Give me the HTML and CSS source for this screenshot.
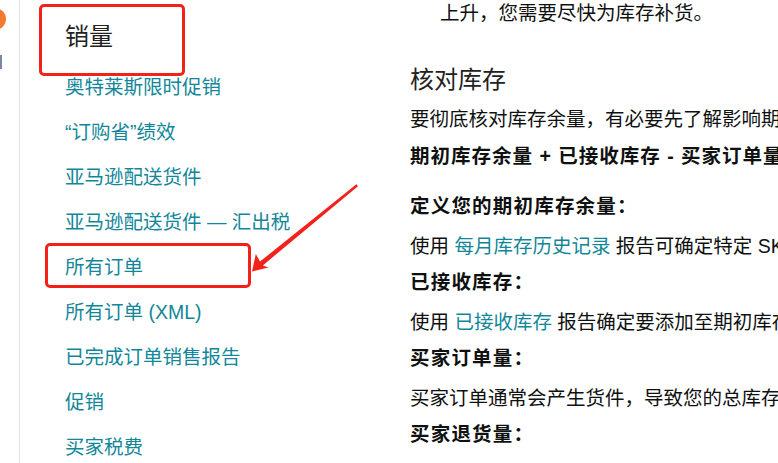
FILE: index.html
```html
<!DOCTYPE html>
<html>
   <head>
      <meta charset="UTF-8">
      <meta name="viewport" content="width=device-width, initial-scale=1.0">
      <title>库存核对</title>
      <link rel="stylesheet" href="styles.css">
   </head>
   <body>
      <div class="page">
         <!-- left rail, mostly cut off -->
         <div class="rail">
            <div class="rail-dot"></div>
            <div class="rail-mark"></div>
         </div>

         <div class="sidebar">
            <h2 class="side-title">销量</h2>
            <ul class="side-links">
               <li><a href="#">奥特莱斯限时促销</a></li>
               <li><a href="#">“订购省”绩效</a></li>
               <li><a href="#">亚马逊配送货件</a></li>
               <li><a href="#">亚马逊配送货件 — 汇出税</a></li>
               <li><a href="#">所有订单</a></li>
               <li><a href="#">所有订单 (XML)</a></li>
               <li><a href="#">已完成订单销售报告</a></li>
               <li><a href="#">促销</a></li>
               <li><a href="#">买家税费</a></li>
            </ul>
         </div>

         <div class="main">
            <p class="cont">上升，您需要尽快为库存补货。</p>
            <h2 class="main-title">核对库存</h2>
            <p class="intro">要彻底核对库存余量，有必要先了解影响期初库存余量的因素。</p>
            <p class="formula">期初库存余量 + 已接收库存 - 买家订单量 + 买家退货量 = 期末库存余量</p>

            <h3 class="label first">定义您的期初库存余量：</h3>
            <p class="text">使用 <a href="#">每月库存历史记录</a> 报告可确定特定 SKU 的期初库存余量。</p>
            <h3 class="label">已接收库存：</h3>
            <p class="text">使用 <a href="#">已接收库存</a> 报告确定要添加至期初库存余量的商品数量。</p>
            <h3 class="label">买家订单量：</h3>
            <p class="text">买家订单通常会产生货件，导致您的总库存减少。</p>
            <h3 class="label">买家退货量：</h3>
         </div>
      </div>

      <!-- annotations drawn over the page -->
      <div class="mark mark-title"></div>
      <div class="mark mark-orders"></div>
      <svg class="arrow" width="778" height="463" viewBox="0 0 778 463">
         <path d="M356.4,184.2 L358,186.2 L262.8,265.4 L268.5,267.5 L252,271.5 L255.8,254 L260,261.6 Z" fill="#f2221b"/>
      </svg>
   </body>
</html>
```

FILE: styles.css
```css
html, body
{
   margin: 0;
   padding: 0;
   overflow: hidden;
   background: #fff;
}
body
{
   position: relative;
   width: 778px;
   height: 463px;
   font-family: "Liberation Sans", "Noto Sans CJK SC", sans-serif;
   color: #0f1111;
}
a
{
   color: #12879a;
   text-decoration: none;
}
h2, h3, p, ul
{
   margin: 0;
   padding: 0;
   font-weight: normal;
}

.page
{
   display: flex;
   height: 463px;
}

/* rail */
.rail
{
   width: 19px;
   flex: none;
   border-right: 1px solid #e4e4e4;
   overflow: hidden;
}
.rail-dot
{
   width: 22px; height: 22px;
   margin: 8px 0 0 -16px;
   border-radius: 50%;
   background: #f57a2e;
}
.rail-mark
{
   width: 2px; height: 14px;
   margin-top: 25px;
   background: #7a88a6;
}

/* sidebar */
.sidebar
{
   width: 345px;
   flex: none;
   padding-left: 45px;
}
.side-title
{
   font-size: 24px;
   line-height: 34px;
   margin-top: 20px;
   margin-bottom: 11px;
   color: #222;
}
.side-links
{
   list-style: none;
}
.side-links li
{
   font-size: 19.5px;
   line-height: 45px;
   white-space: nowrap;
}

/* main text */
.main
{
   flex: 1;
   min-width: 0;
   overflow: hidden;
   font-size: 19.5px;
   line-height: 28px;
   white-space: nowrap;
}
.cont
{
   margin-top: -1px;
   padding-left: 30px;
}
.main-title
{
   font-size: 24px;
   line-height: 32px;
   margin-top: 37px;
   color: #222;
}
.intro
{
   margin-top: 9px;
}
.formula
{
   font-weight: bold;
   letter-spacing: 1px;
   margin-top: 9px;
}
.label
{
   font-size: 19.5px;
   font-weight: bold;
   letter-spacing: 1.2px;
   margin-top: 8px;
}
.label.first
{
   margin-top: 22px;
}
.text
{
   margin-top: 12px;
}

/* red annotations */
.mark
{
   position: absolute;
   border: 3px solid #f2221b;
   border-radius: 5px;
   box-sizing: border-box;
}
.mark-title
{
   left: 39px; top: 4px;
   width: 146px; height: 72px;
}
.mark-orders
{
   left: 45px; top: 243px;
   width: 206px; height: 45px;
}
.arrow
{
   position: absolute;
   left: 0; top: 0;
   pointer-events: none;
}
```
